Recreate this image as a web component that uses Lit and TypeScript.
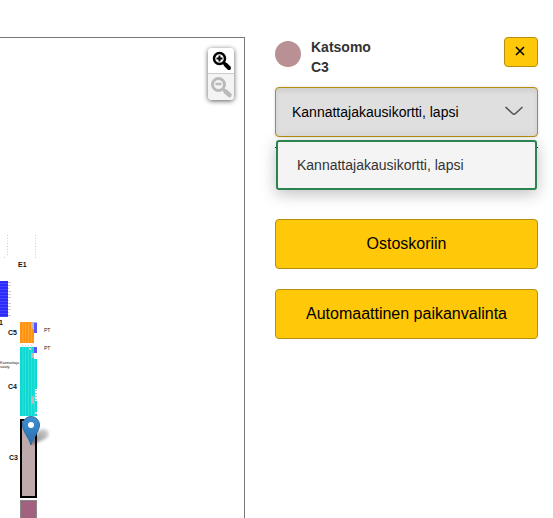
import { LitElement, html, svg, css } from "lit";
import { customElement, property, state } from "lit/decorators.js";

const range = (n: number) => Array.from({ length: n }, (_, i) => i);

@customElement("seat-map")
class SeatMap extends LitElement {
  static styles = css`
    :host {
      display: block;
      position: relative;
      overflow: hidden;
      border-top: 1px solid #777;
      border-right: 1px solid #777;
      background: #fff;
    }
    .canvas {
      position: absolute;
      inset: 0;
      width: 100%;
      height: 100%;
      font-family: "Liberation Sans", Arial, sans-serif;
    }
    .name { font-size: 7px; font-weight: bold; fill: #111; }
    .tiny { font-size: 4px; fill: #222; }
    .seat { font-size: 5px; fill: #222; }
    .zoom {
      position: absolute;
      top: 10px;
      right: 10px;
      width: 26px;
      border-radius: 4px;
      overflow: hidden;
      box-shadow: 0 1px 5px rgba(0, 0, 0, 0.65);
    }
    .zoom button {
      display: block;
      box-sizing: border-box;
      width: 26px;
      height: 26px;
      padding: 0;
      border: 0;
      background: #fff;
      color: #000;
    }
    .zoom button:first-child { border-bottom: 1px solid #ccc; }
    .zoom button:disabled { background: #f4f4f4; color: #bbb; }
    .zoom svg { display: block; }
  `;

  render() {
    return html`
      <svg class="canvas" role="img" aria-label="Katsomokartta">
        <defs>
          <linearGradient id="pin" x1="0" y1="0" x2="0" y2="1">
            <stop offset="0" stop-color="#3d8fd1" />
            <stop offset="1" stop-color="#2a70b0" />
          </linearGradient>
          <linearGradient id="fade" x1="0" y1="1" x2="1" y2="0">
            <stop offset="0" stop-color="#000" stop-opacity=".5" />
            <stop offset="1" stop-color="#000" stop-opacity=".15" />
          </linearGradient>
          <filter id="soft" x="-50%" y="-50%" width="200%" height="200%">
            <feGaussianBlur stdDeviation="1.6" />
          </filter>
        </defs>
        <g transform="translate(0 -38)">
          <g fill="#ccc">
            ${range(8).map((i) => svg`
              <rect x="7" y=${235 + i * 2.75} width="1" height="1" />
              <rect x="35" y=${235 + i * 2.75} width="1" height="1" />`)}
            <rect x="4" y="257" width="1" height="1" />
            <rect x="35" y="257" width="1" height="1" />
          </g>
          <text class="name" x="18" y="267">E1</text>

          <rect x="0" y="281" width="8" height="36" fill="#2b2bff" />
          ${range(12).map((i) => svg`
            <rect x="0" y=${283 + i * 3} width="8" height="1" fill="#4646ff" />
            <rect x="8" y=${282 + i * 3} width=${i % 4 === 2 ? 1 : 3} height="1" fill="#ccc" />`)}
          <text class="name" x="-1" y="325">1</text>

          <rect x="20" y="322" width="14" height="21" fill="#ff930f" />
          ${range(4).map((i) => svg`
            <rect x=${22.7 + i * 2.8} y="322" width=".5" height="21" fill="#ffb75c" />
            <rect x=${22 + i * 3} y="345" width="1" height="1" fill="#ccc" />`)}
          <rect x="31" y="322" width="3" height="7" fill="#bbb" />
          <rect x="34" y="322" width="3" height="11" fill="#5b55ff" />
          <rect x="34" y="322" width="3" height="1" fill="#aaf" />
          <text class="name" x="8" y="335">C5</text>
          <text class="seat" x="44" y="332">PT</text>
          <text class="seat" x="44" y="350">PT</text>

          <rect x="20" y="347" width="17" height="69" fill="#0bd9d2" />
          ${range(5).map((i) => svg`
            <rect x=${22.7 + i * 2.8} y="347" width=".5" height="69" fill="#5fe8e3" />`)}
          <rect x="34" y="347" width="3" height="6" fill="#5b55ff" />
          <rect x="29" y="348" width="2" height="2" fill="#ccc" />
          <rect x="34" y="353" width="3" height="6" fill="#fff" />
          <rect x="31" y="353" width="3" height="5" fill="#bbb" />
          <rect x="35" y="389" width="2" height="12" fill="#fff" />
          ${range(4).map((i) => svg`
            <rect x="35" y=${390 + i * 3} width="2" height="1" fill="#bbb" />`)}
          <rect x="31" y="396" width="3" height="8" fill="#bbb" />
          <rect x="35" y="412" width="2" height="2" fill="#ddd" />
          <text class="name" x="8" y="389">C4</text>
          <text class="tiny" x="0" y="364">Kannattaja</text>
          <text class="tiny" x="0" y="368">sääty</text>

          <rect x="21" y="420" width="15" height="77" fill="#bfaaab" stroke="#000" stroke-width="2" />
          <text class="name" x="9" y="460">C3</text>
          <rect x="20.5" y="500.5" width="16" height="60" fill="#a1617f" stroke="#888" />

          <path d="M31 445 L36 434 Q41 427 47 430 Q51 435 45 439 Z" fill="url(#fade)" filter="url(#soft)" />
          <path
            d="M31 445 C29 438 22.500 431 22.500 425 A8.500 8.500 0 0 1 39.500 425 C39.500 431 33 438 31 445 Z"
            fill="url(#pin)" stroke="#2e6c9e" />
          <circle cx="31" cy="425" r="3" fill="#fff" />
        </g>
      </svg>
      <div class="zoom">
        <button aria-label="Lähennä">
          <svg width="26" height="25" fill="none" stroke="currentColor">
            <circle cx="11.500" cy="10.500" r="5.500" stroke-width="2.500" />
            <path d="M8.500 10.500h6M11.500 7.500v6" stroke-width="2" />
            <path d="M15.500 14.500l1.500 1.500" stroke-width="3" />
            <path d="M17.500 16.500l3.500 3.500" stroke-width="4" stroke-linecap="round" />
          </svg>
        </button>
        <button aria-label="Loitonna" disabled>
          <svg width="26" height="26" fill="none" stroke="currentColor">
            <circle cx="10.500" cy="10.500" r="6" stroke-width="3" />
            <path d="M7.500 10h6" stroke-width="2.500" />
            <path d="M15 15l2 2" stroke-width="3" />
            <path d="M17.500 17.500l4 3.500" stroke-width="4.500" stroke-linecap="round" />
          </svg>
        </button>
      </div>
    `;
  }
}

@customElement("ticket-select")
class TicketSelect extends LitElement {
  @property({ type: Array }) options: string[] = [];
  @state() private open = true;

  static styles = css`
    :host { display: block; position: relative; }
    select {
      display: block;
      box-sizing: border-box;
      width: 100%;
      height: 50px;
      padding: 0 48px 0 16px;
      appearance: none;
      border: 1px solid #b58e0c;
      border-radius: 4px;
      background: #dfdfdf;
      box-shadow: inset 0 3px 5px rgba(0, 0, 0, 0.08), 0 0 3px rgba(0, 0, 0, 0.15);
      color: #000;
      font: 14px/20px "Liberation Sans", Arial, sans-serif;
    }
    .arrow {
      position: absolute;
      top: 18px;
      right: 14px;
      pointer-events: none;
    }
    .list {
      position: absolute;
      z-index: 1;
      top: 100%;
      left: 0;
      right: 0;
      margin: 3px 1px 0;
      padding: 0;
      list-style: none;
      border: 2px solid #2b8450;
      border-radius: 3px;
      background: #f4f4f4;
      box-shadow: 0 4px 16px rgba(0, 0, 0, 0.25);
    }
    .list button {
      display: block;
      width: 100%;
      height: 46px;
      padding: 0 19px;
      border: 0;
      background: none;
      color: #333;
      text-align: left;
      font: 14px/20px "Liberation Sans", Arial, sans-serif;
    }
  `;

  render() {
    return html`
      <select aria-label="Lipputyyppi">
        ${this.options.map((o) => html`<option>${o}</option>`)}
      </select>
      <svg class="arrow" width="20" height="14" fill="none" stroke="#555" stroke-width="1.6">
        <path d="M1.500 2L8.500 8.500Q10 10 11.500 8.500L18.500 2" />
      </svg>
      ${this.open
        ? html`<ul class="list">
            ${this.options.map((o) => html`<li><button @click=${() => (this.open = false)}>${o}</button></li>`)}
          </ul>`
        : null}
    `;
  }
}

@customElement("app-root")
class AppRoot extends LitElement {
  static styles = css`
    :host {
      display: grid;
      grid-template-columns: minmax(0, 245fr) minmax(0, 263fr);
      column-gap: 30px;
      box-sizing: border-box;
      min-height: 100vh;
      padding: 37px 15px 0 0;
      background: #fff;
      color: #333;
      font: 14px/20px "Liberation Sans", Arial, sans-serif;
    }
    .head {
      display: flex;
      align-items: flex-start;
      gap: 10px;
      margin-bottom: 10px;
    }
    .dot {
      width: 26px;
      height: 26px;
      margin-top: 4px;
      border-radius: 50%;
      background: #b99094;
    }
    .title { flex: 1; margin: 0; font-size: 14px; line-height: 20px; }
    .title span { display: block; }
    .btn {
      display: block;
      box-sizing: border-box;
      border: 1px solid #b58e0c;
      border-radius: 4px;
      background: #ffc90a;
      color: #000;
      font: 16px/20px "Liberation Sans", Arial, sans-serif;
    }
    .close {
      display: grid;
      place-items: center;
      width: 34px;
      height: 30px;
      padding: 0 2px 2px 0;
    }
    .rule {
      height: 1px;
      margin: 10px 0 0;
      border: 0;
      background: #333;
    }
    .actions { display: grid; gap: 20px; margin-top: 71px; }
    .wide { width: 100%; height: 50px; }
  `;

  render() {
    return html`
      <seat-map></seat-map>
      <main>
        <div class="head">
          <span class="dot"></span>
          <h2 class="title"><span>Katsomo</span><span>C3</span></h2>
          <button class="btn close" aria-label="Sulje">
            <svg width="10" height="10" stroke="#000" stroke-width="1.6">
              <path d="M1 1l8 8M9 1l-8 8" />
            </svg>
          </button>
        </div>
        <ticket-select .options=${["Kannattajakausikortti, lapsi"]}></ticket-select>
        <hr class="rule" />
        <div class="actions">
          <button class="btn wide">Ostoskoriin</button>
          <button class="btn wide">Automaattinen paikanvalinta</button>
        </div>
      </main>
    `;
  }
}
